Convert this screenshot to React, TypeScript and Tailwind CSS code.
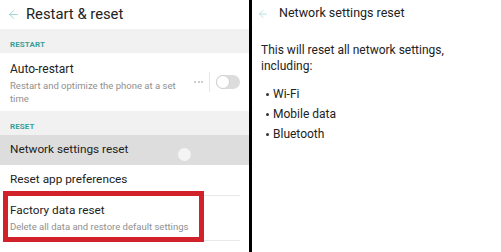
import { ArrowLeft } from 'lucide-react'

const font = { fontFamily: 'Roboto, "Noto Sans", Arial, sans-serif' }

function SectionLabel({ label }: { label: string }) {
  return (
    <div className="h-[24px] bg-[#f1f1f1] flex items-end pb-[4px] pl-[10px]">
      <span className="text-[8px] font-bold tracking-[0.1px] text-[#3a9f9b] leading-none">{label}</span>
    </div>
  )
}

export default function App() {
  return (
    <div className="w-[501px] h-[252px] flex bg-white overflow-hidden text-[#222]" style={font}>
      {/* Left: Restart & reset */}
      <div className="relative w-[249px] h-full flex flex-col bg-white">
        <div className="h-[29px] flex items-center pl-[7px] gap-[6px]">
          <ArrowLeft className="w-[13px] h-[13px] text-[#8fd0cb]" strokeWidth={1.6} />
          <span className="text-[14.8px] leading-none text-[#222]">Restart &amp; reset</span>
        </div>

        <SectionLabel label="RESTART" />

        <div className="h-[58px] flex items-center pl-[10px] pr-[9px]">
          <div className="flex-1 min-w-0 pt-[2px]">
            <div className="text-[12px] leading-[15px] text-[#222]">Auto-restart</div>
            <div className="text-[9.5px] leading-[13px] text-[#909090] mt-[2px] w-[172px]">
              Restart and optimize the phone at a set time
            </div>
          </div>
          <div className="flex items-center">
            <div className="flex gap-[1.5px] mr-[6px]">
              <span className="w-[2px] h-[2px] rounded-full bg-[#bdbdbd]" />
              <span className="w-[2px] h-[2px] rounded-full bg-[#bdbdbd]" />
              <span className="w-[2px] h-[2px] rounded-full bg-[#bdbdbd]" />
            </div>
            <div className="w-px h-[20px] bg-[#e6e6e6] mr-[6px]" />
            <div className="relative w-[24px] h-[14px] rounded-full bg-[#dcdcdc]">
              <div className="absolute left-0 top-0 w-[14px] h-[14px] rounded-full bg-white border border-[#d0d0d0]" />
            </div>
          </div>
        </div>

        <SectionLabel label="RESET" />

        <div className="relative h-[30px] bg-[#dddddd] flex items-center pl-[10px]">
          <span className="text-[11.8px] leading-none text-[#222]">Network settings reset</span>
          <div className="absolute left-[178px] top-[13px] w-[13px] h-[13px] rounded-full bg-[#f4f4f4]" />
        </div>

        <div className="h-[30px] flex items-center pl-[10px]">
          <span className="text-[11.8px] leading-none text-[#222]">Reset app preferences</span>
        </div>
        <div className="h-px bg-[#e8e8e8] ml-[10px] mr-[9px]" />

        <div className="h-[44px] flex flex-col justify-center pl-[10px]">
          <div className="text-[11.8px] leading-[15px] text-[#222]">Factory data reset</div>
          <div className="text-[9.5px] leading-[12px] text-[#909090] mt-[3px]">Delete all data and restore default settings</div>
        </div>
        <div className="h-px bg-[#e8e8e8] ml-[10px] mr-[9px]" />

        {/* annotation box */}
        <div className="absolute left-[3px] top-[191px] w-[201px] h-[51px] border-[5px] border-[#d1222b]" />
      </div>

      <div className="w-[3px] h-full bg-black" />

      {/* Right: Network settings reset */}
      <div className="flex-1 h-full flex flex-col bg-white">
        <div className="h-[27px] flex items-center pl-[5px] gap-[10px]">
          <ArrowLeft className="w-[12px] h-[12px] text-[#a8dbd7]" strokeWidth={1.6} />
          <span className="text-[12.5px] leading-none text-[#222]">Network settings reset</span>
        </div>
        <div className="pl-[9px] pt-[15px] text-[12px] leading-[16px] text-[#222]">
          <div className="w-[200px]">This will reset all network settings, including:</div>
          <div className="mt-[10px] flex flex-col">
            {['Wi-Fi', 'Mobile data', 'Bluetooth'].map((item) => (
              <div key={item} className="flex items-center h-[20px]">
                <span className="w-[3px] h-[3px] rounded-full bg-[#333] ml-[5px] mr-[4px]" />
                <span>{item}</span>
              </div>
            ))}
          </div>
        </div>
      </div>
    </div>
  )
}
